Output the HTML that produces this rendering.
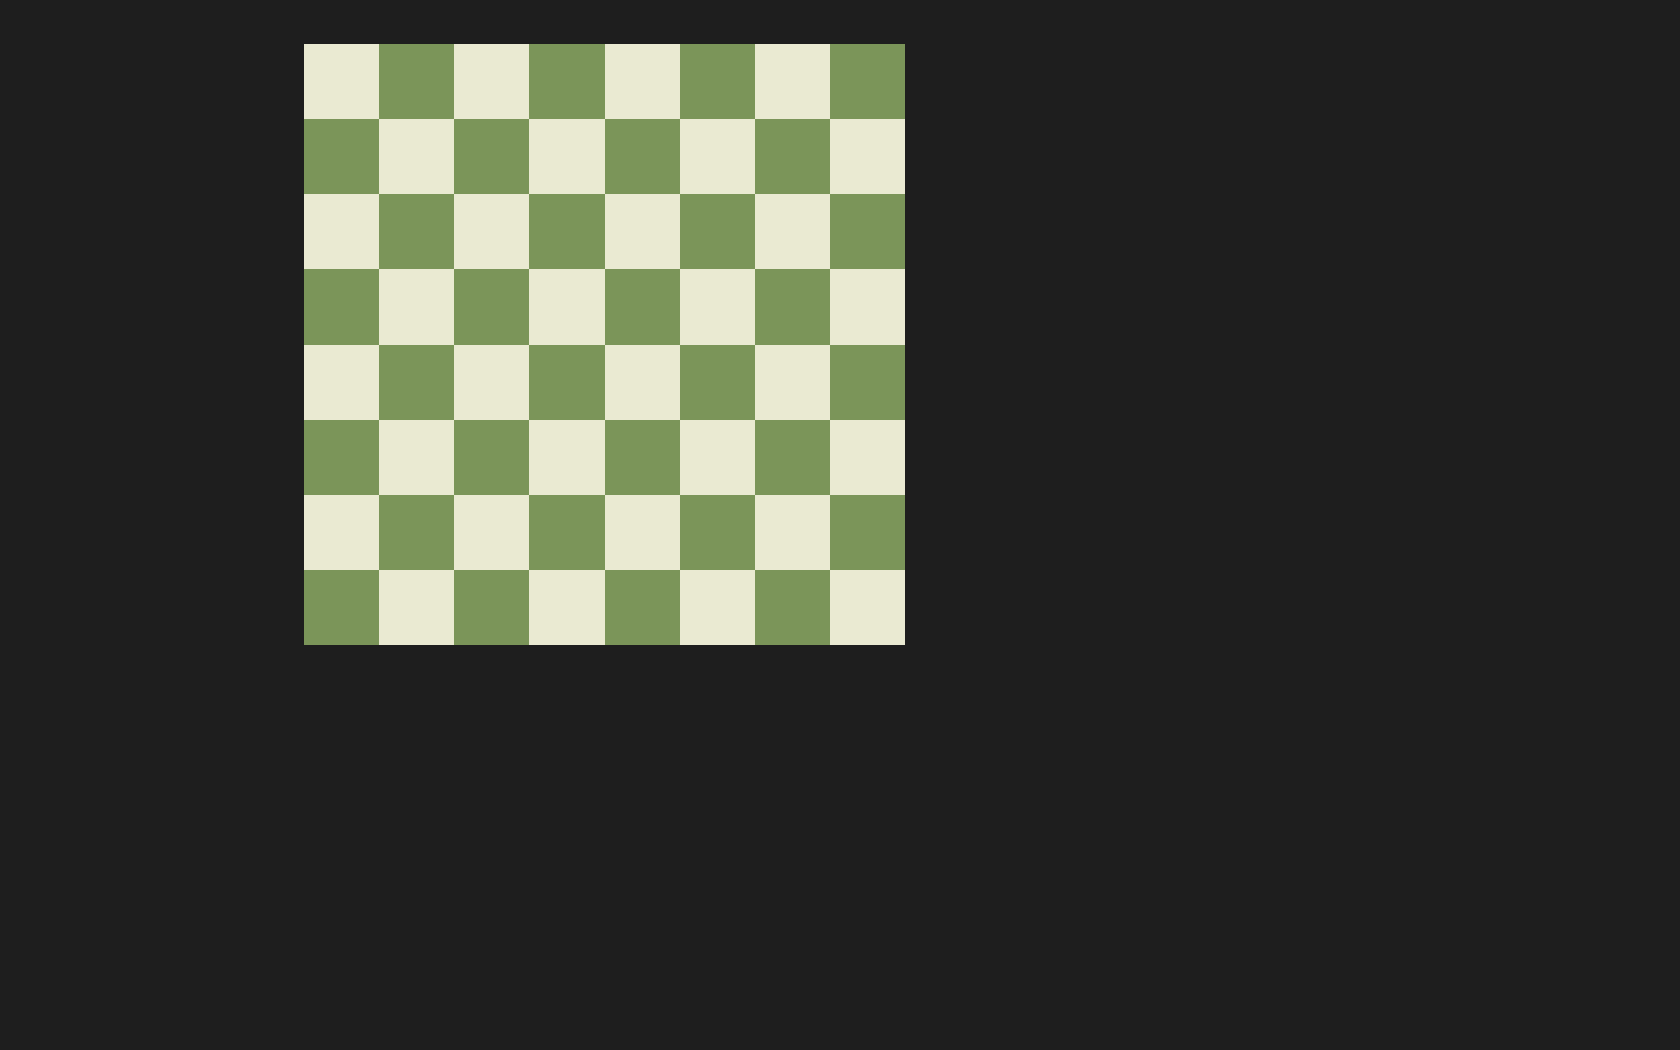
<!DOCTYPE html>
<html><head><style>
html,body{margin:0;background:#1e1e1e;width:1680px;height:1050px;overflow:hidden}
#b{position:absolute;left:304px;top:44px;width:601px;height:601px;display:grid;grid-template-columns:repeat(8,1fr);grid-template-rows:repeat(8,1fr)}
.l{background:#eaead2}.d{background:#7b9559}
</style></head><body><div id="b">
<div class="l"></div><div class="d"></div><div class="l"></div><div class="d"></div><div class="l"></div><div class="d"></div><div class="l"></div><div class="d"></div>
<div class="d"></div><div class="l"></div><div class="d"></div><div class="l"></div><div class="d"></div><div class="l"></div><div class="d"></div><div class="l"></div>
<div class="l"></div><div class="d"></div><div class="l"></div><div class="d"></div><div class="l"></div><div class="d"></div><div class="l"></div><div class="d"></div>
<div class="d"></div><div class="l"></div><div class="d"></div><div class="l"></div><div class="d"></div><div class="l"></div><div class="d"></div><div class="l"></div>
<div class="l"></div><div class="d"></div><div class="l"></div><div class="d"></div><div class="l"></div><div class="d"></div><div class="l"></div><div class="d"></div>
<div class="d"></div><div class="l"></div><div class="d"></div><div class="l"></div><div class="d"></div><div class="l"></div><div class="d"></div><div class="l"></div>
<div class="l"></div><div class="d"></div><div class="l"></div><div class="d"></div><div class="l"></div><div class="d"></div><div class="l"></div><div class="d"></div>
<div class="d"></div><div class="l"></div><div class="d"></div><div class="l"></div><div class="d"></div><div class="l"></div><div class="d"></div><div class="l"></div>
</div></body></html>
